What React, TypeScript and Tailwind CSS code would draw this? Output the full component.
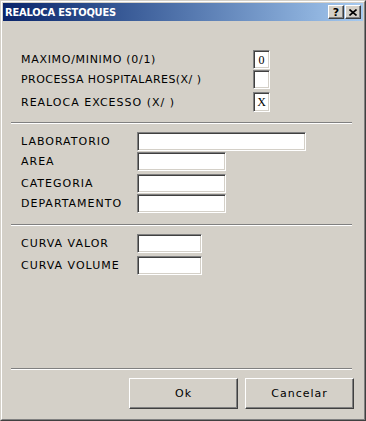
import React from "react";

const sunken =
  "border border-t-[#808080] border-l-[#808080] border-b-white border-r-white shadow-[inset_1px_1px_0_#404040,inset_-1px_-1px_0_#d4d0c8] bg-white";

const raised =
  "border border-t-white border-l-white border-b-[#404040] border-r-[#404040] shadow-[inset_-1px_-1px_0_#808080] bg-[#d4d0c8]";

const label = "text-[11px] leading-[13px] text-black whitespace-nowrap";

function Separator({ className = "" }: { className?: string }) {
  return (
    <div className={`ml-[8px] mr-[11px] border-t border-t-[#808080] border-b border-b-white ${className}`} />
  );
}

function FlagRow({
  text,
  value,
  tracking,
  className = "",
  boxHeight = "h-[19px]",
}: {
  text: string;
  value?: string;
  tracking: string;
  className?: string;
  boxHeight?: string;
}) {
  return (
    <div className={`flex items-center pl-[18px] ${className}`}>
      <span className={`${label} ${tracking} w-[232px]`}>{text}</span>
      <div
        className={`${sunken} ${boxHeight} w-[17px] flex items-center justify-center text-[12px] leading-none text-black`}
        style={{ fontFamily: '"Liberation Serif", "DejaVu Serif", serif' }}
      >
        {value}
      </div>
    </div>
  );
}

function FieldRow({ text, width, className = "" }: { text: string; width: string; className?: string }) {
  return (
    <div className={`flex items-center pl-[18px] ${className}`}>
      <span className={`${label} tracking-[1px] w-[116px]`}>{text}</span>
      <div className={`${sunken} h-[19px] ${width}`} />
    </div>
  );
}

export default function App() {
  return (
    <div
      className="w-[366px] h-[421px] border border-t-[#d4d0c8] border-l-[#d4d0c8] border-b-[#404040] border-r-[#404040] bg-[#d4d0c8]"
      style={{ fontFamily: '"DejaVu Sans", Verdana, sans-serif' }}
    >
      <div className="h-full border border-t-white border-l-white border-b-[#808080] border-r-[#808080] p-px flex flex-col">
        {/* Title bar */}
        <div className="h-[18px] shrink-0 flex items-center pl-[2px] pr-[2px] bg-gradient-to-r from-[#0a246a] to-[#a6caf0]">
          <span
            className="flex-1 text-white font-bold text-[11px] leading-none whitespace-nowrap tracking-[-0.2px]"
            style={{ fontFamily: '"DejaVu Sans Condensed", "DejaVu Sans", sans-serif' }}
          >
            REALOCA ESTOQUES
          </span>
          <div className={`${raised} w-[16px] h-[14px] flex items-center justify-center`}>
            <span className="text-[11px] font-bold leading-none text-black">?</span>
          </div>
          <div className={`${raised} w-[16px] h-[14px] ml-[1px] flex items-center justify-center`}>
            <svg width="8" height="7" viewBox="0 0 8 7">
              <path d="M0.5 0.5 L7.5 6.5 M7.5 0.5 L0.5 6.5" stroke="#000" strokeWidth="1.6" />
            </svg>
          </div>
        </div>

        {/* Flags */}
        <FlagRow text="MAXIMO/MINIMO (0/1)" value="0" tracking="tracking-[0.7px]" className="mt-[29px]" />
        <FlagRow text="PROCESSA HOSPITALARES(X/ )" tracking="tracking-[0.45px]" className="mt-[1px]" />
        <FlagRow
          text="REALOCA EXCESSO (X/ )"
          value="X"
          tracking="tracking-[1px]"
          className="mt-[3px]"
          boxHeight="h-[20px]"
        />

        <Separator className="mt-[10px]" />

        {/* Filtros */}
        <FieldRow text="LABORATORIO" width="w-[169px]" className="mt-[8px]" />
        <FieldRow text="AREA" width="w-[89px]" className="mt-[1px]" />
        <FieldRow text="CATEGORIA" width="w-[89px]" className="mt-[3px]" />
        <FieldRow text="DEPARTAMENTO" width="w-[89px]" className="mt-[1px]" />

        <Separator className="mt-[11px]" />

        {/* Curvas */}
        <FieldRow text="CURVA VALOR" width="w-[65px]" className="mt-[8px]" />
        <FieldRow text="CURVA VOLUME" width="w-[65px]" className="mt-[3px]" />

        <Separator className="mt-[93px]" />

        {/* Botoes */}
        <div className="flex justify-end gap-[7px] pr-[9px] mt-[8px]">
          <button className={`${raised} w-[109px] h-[31px] ${label} tracking-[1px] flex items-center justify-center`}>
            Ok
          </button>
          <button className={`${raised} w-[109px] h-[31px] ${label} tracking-[1px] flex items-center justify-center`}>
            Cancelar
          </button>
        </div>
      </div>
    </div>
  );
}
